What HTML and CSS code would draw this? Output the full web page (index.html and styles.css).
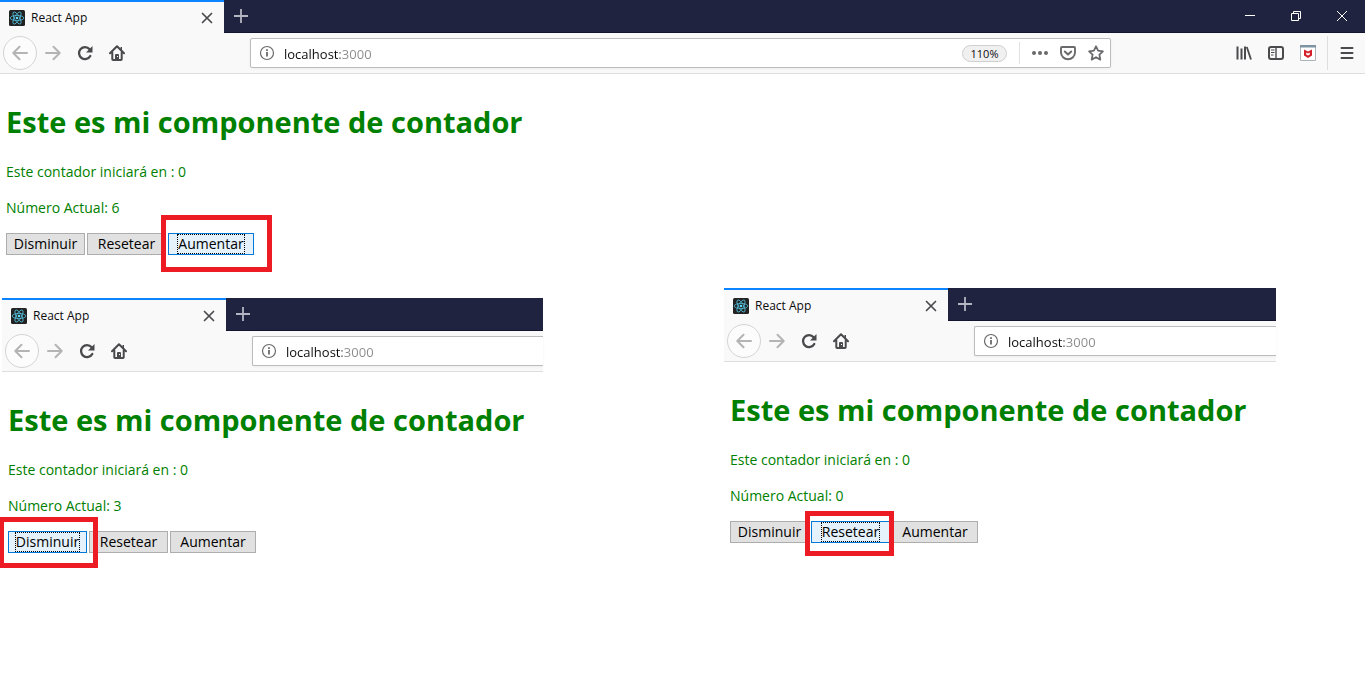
FILE: index.html
```html
<!DOCTYPE html>
<html lang="es">
<head>
<meta charset="utf-8">
<title>React App</title>
<link rel="stylesheet" href="styles.css">
</head>
<body>
<svg class="sprite" aria-hidden="true">
  <symbol id="react" viewBox="0 0 16 16"><rect width="16" height="16" rx="1.5" fill="#222"/><g fill="none" stroke="#53bfdc" stroke-width=".8"><ellipse cx="8" cy="8" rx="6.8" ry="2.6"/><ellipse cx="8" cy="8" rx="6.8" ry="2.6" transform="rotate(60 8 8)"/><ellipse cx="8" cy="8" rx="6.8" ry="2.6" transform="rotate(120 8 8)"/></g><circle cx="8" cy="8" r="1.3" fill="#61dafb"/></symbol>
  <symbol id="close" viewBox="0 0 16 16"><path d="M3.5 3.5l9 9m0-9l-9 9" fill="none" stroke="currentColor" stroke-width="1.7" stroke-linecap="round"/></symbol>
  <symbol id="plus" viewBox="0 0 16 16"><path d="M8 1v14M1 8h14" fill="none" stroke="currentColor" stroke-width="1.8"/></symbol>
  <symbol id="back" viewBox="0 0 16 16"><path d="M15 8H1.5M7.5 1.8L1.3 8l6.2 6.2" fill="none" stroke="currentColor" stroke-width="2" stroke-linecap="round" stroke-linejoin="round"/></symbol>
  <symbol id="forward" viewBox="0 0 16 16"><path d="M1 8h13.500M8.500 1.800L14.700 8l-6.200 6.200" fill="none" stroke="currentColor" stroke-width="2" stroke-linecap="round" stroke-linejoin="round"/></symbol>
  <symbol id="reload" viewBox="0 0 16 16"><path d="M13.300 11A6 6 0 1 1 12.600 4.200" fill="none" stroke="currentColor" stroke-width="2.300" stroke-linecap="round"/><path d="M15.500 1v6.500H9z" fill="currentColor"/></symbol>
  <symbol id="home" viewBox="0 0 16 16"><path d="M1 8.300L8 1.300l7 7M3.300 7.500v6.700q0 .8.800.8h7.800q.8 0 .8-.8V7.500" fill="none" stroke="currentColor" stroke-width="2" stroke-linecap="round" stroke-linejoin="round"/><path d="M6 15v-5q0-1 1-1h2q1 0 1 1v5zM11.500 2h1.500v4l-1.500-1.500z" fill="currentColor"/><path d="M8 11h1v1H8z" fill="#fff"/></symbol>
  <symbol id="info" viewBox="0 0 16 16"><circle cx="8" cy="8" r="6.500" fill="none" stroke="currentColor" stroke-width="1.200"/><path d="M8 7v4.500M8 4.200v1.700" stroke="currentColor" stroke-width="1.800"/></symbol>
  <symbol id="dots" viewBox="0 0 16 16"><g fill="currentColor"><circle cx="2" cy="8" r="2"/><circle cx="8" cy="8" r="2"/><circle cx="14" cy="8" r="2"/></g></symbol>
  <symbol id="pocket" viewBox="0 0 16 16"><path d="M2 2h12q1 0 1 1v4.500a7 6.700 0 0 1-14 0V3q0-1 1-1z" fill="none" stroke="currentColor" stroke-width="1.900"/><path d="M4.800 6.500L8 9.500l3.200-3" fill="none" stroke="currentColor" stroke-width="2" stroke-linecap="round" stroke-linejoin="round"/></symbol>
  <symbol id="star" viewBox="0 0 16 16"><path d="M8 1.300l2.100 4.400 4.800.6-3.500 3.300.9 5L8 12.200l-4.300 2.400.9-5L1.100 6.300l4.800-.6z" fill="none" stroke="currentColor" stroke-width="1.800" stroke-linejoin="round"/></symbol>
  <symbol id="library" viewBox="0 0 16 16"><path d="M1.500 1.500v13M5.500 3.500v11M9 1.500v13" fill="none" stroke="currentColor" stroke-width="2"/><path d="M10.800 2l4.200 12.500" fill="none" stroke="currentColor" stroke-width="1.800"/></symbol>
  <symbol id="sidebar" viewBox="0 0 16 16"><rect x="1" y="2" width="14" height="12" rx="2" fill="none" stroke="currentColor" stroke-width="2"/><path d="M8 2v12" stroke="currentColor" stroke-width="1.400"/><path d="M3 5h3.500M3 7.500h3.500M3 10h2.500" stroke="currentColor"/></symbol>
  <symbol id="shield" viewBox="0 0 16 16"><path d="M.5.500h15v15H.5z" fill="#fff" stroke="#aab4ba"/><path d="M0 0h16v2.500H0z" fill="#7c93a3"/><path d="M4 4.500l4 2 4-2v6L8 13l-4-2.500z" fill="#d5202c"/><path d="M6.200 7.500L8 8.500l1.800-1v2L8 10.500l-1.800-1z" fill="#fff"/></symbol>
  <symbol id="menu" viewBox="0 0 16 16"><path d="M2.500 3h11M2.500 8h11M2.500 13h11" stroke="currentColor" stroke-width="2" stroke-linecap="round"/></symbol>
  <symbol id="win-min" viewBox="0 0 16 16"><path d="M3 7.500h10" stroke="currentColor"/></symbol>
  <symbol id="win-max" viewBox="0 0 16 16"><path d="M3.500 5.500h7v7h-7zM5.500 5V3.500h7v7H11" fill="none" stroke="currentColor"/></symbol>
  <symbol id="win-close" viewBox="0 0 16 16"><path d="M3 3l10 10M13 3L3 13" stroke="currentColor"/></symbol>
</svg>

<section class="window">
  <header class="chrome">
    <div class="tabbar">
      <div class="tab"><svg class="icon"><use href="#react"/></svg><span class="tab-title">React App</span><button class="tab-close" aria-label="Cerrar pestaña"><svg class="icon"><use href="#close"/></svg></button></div>
      <button class="new-tab" aria-label="Nueva pestaña"><svg class="icon"><use href="#plus"/></svg></button>
      <div class="window-controls">
        <button aria-label="Minimizar"><svg class="icon"><use href="#win-min"/></svg></button>
        <button aria-label="Restaurar"><svg class="icon"><use href="#win-max"/></svg></button>
        <button aria-label="Cerrar"><svg class="icon"><use href="#win-close"/></svg></button>
      </div>
    </div>
    <div class="toolbar">
      <nav class="nav">
        <button class="back" aria-label="Atrás"><svg class="icon"><use href="#back"/></svg></button>
        <button class="faded" aria-label="Adelante"><svg class="icon"><use href="#forward"/></svg></button>
        <button aria-label="Recargar"><svg class="icon"><use href="#reload"/></svg></button>
        <button aria-label="Inicio"><svg class="icon"><use href="#home"/></svg></button>
      </nav>
      <div class="urlbar">
        <svg class="icon"><use href="#info"/></svg>
        <input class="url" type="text" aria-label="Dirección" value="localhost:3000">
        <button class="zoom">110%</button>
        <div class="page-actions">
          <button aria-label="Acciones"><svg class="icon"><use href="#dots"/></svg></button>
          <button aria-label="Guardar en Pocket"><svg class="icon"><use href="#pocket"/></svg></button>
          <button aria-label="Marcador"><svg class="icon"><use href="#star"/></svg></button>
        </div>
      </div>
      <div class="tools">
        <button aria-label="Catálogo"><svg class="icon"><use href="#library"/></svg></button>
        <button aria-label="Barra lateral"><svg class="icon"><use href="#sidebar"/></svg></button>
        <button aria-label="Protección"><svg class="icon"><use href="#shield"/></svg></button>
        <button class="menu" aria-label="Menú"><svg class="icon"><use href="#menu"/></svg></button>
      </div>
    </div>
  </header>
  <main class="counter">
    <h1>Este es mi componente de contador</h1>
    <p>Este contador iniciará en : 0</p>
    <p>Número Actual: 6</p>
    <div class="actions">
      <div class="action"><button>Disminuir</button></div>
      <div class="action"><button>Resetear</button></div>
      <div class="action wide"><button class="focused"><span>Aumentar</span></button><i class="mark mark-increase"></i></div>
    </div>
  </main>
</section>

<div class="examples">
  <section class="window partial lower">
    <header class="chrome">
      <div class="tabbar">
        <div class="tab"><svg class="icon"><use href="#react"/></svg><span class="tab-title">React App</span><button class="tab-close" aria-label="Cerrar pestaña"><svg class="icon"><use href="#close"/></svg></button></div>
        <button class="new-tab" aria-label="Nueva pestaña"><svg class="icon"><use href="#plus"/></svg></button>
      </div>
      <div class="toolbar">
        <nav class="nav">
          <button class="back" aria-label="Atrás"><svg class="icon"><use href="#back"/></svg></button>
          <button class="faded" aria-label="Adelante"><svg class="icon"><use href="#forward"/></svg></button>
          <button aria-label="Recargar"><svg class="icon"><use href="#reload"/></svg></button>
          <button aria-label="Inicio"><svg class="icon"><use href="#home"/></svg></button>
        </nav>
        <div class="urlbar">
          <svg class="icon"><use href="#info"/></svg>
          <input class="url" type="text" aria-label="Dirección" value="localhost:3000">
        </div>
      </div>
    </header>
    <div class="counter">
      <h1>Este es mi componente de contador</h1>
      <p>Este contador iniciará en : 0</p>
      <p>Número Actual: 3</p>
      <div class="actions">
        <div class="action"><button class="focused"><span>Disminuir</span></button><i class="mark mark-decrease"></i></div>
        <div class="action"><button>Resetear</button></div>
        <div class="action wide"><button>Aumentar</button></div>
      </div>
    </div>
  </section>

  <section class="window partial second">
    <header class="chrome">
      <div class="tabbar">
        <div class="tab"><svg class="icon"><use href="#react"/></svg><span class="tab-title">React App</span><button class="tab-close" aria-label="Cerrar pestaña"><svg class="icon"><use href="#close"/></svg></button></div>
        <button class="new-tab" aria-label="Nueva pestaña"><svg class="icon"><use href="#plus"/></svg></button>
      </div>
      <div class="toolbar">
        <nav class="nav">
          <button class="back" aria-label="Atrás"><svg class="icon"><use href="#back"/></svg></button>
          <button class="faded" aria-label="Adelante"><svg class="icon"><use href="#forward"/></svg></button>
          <button aria-label="Recargar"><svg class="icon"><use href="#reload"/></svg></button>
          <button aria-label="Inicio"><svg class="icon"><use href="#home"/></svg></button>
        </nav>
        <div class="urlbar">
          <svg class="icon"><use href="#info"/></svg>
          <input class="url" type="text" aria-label="Dirección" value="localhost:3000">
        </div>
      </div>
    </header>
    <div class="counter">
      <h1>Este es mi componente de contador</h1>
      <p>Este contador iniciará en : 0</p>
      <p>Número Actual: 0</p>
      <div class="actions">
        <div class="action"><button>Disminuir</button></div>
        <div class="action"><button class="focused"><span>Resetear</span></button><i class="mark mark-reset"></i></div>
        <div class="action wide"><button>Aumentar</button></div>
      </div>
    </div>
  </section>
</div>
</body>
</html>
```

FILE: styles.css
```css
* { box-sizing: border-box; }

body {
  min-height: 100vh;
  margin: 0;
  background: #fff;
  color: #000;
  font-family: "Segoe UI", "Open Sans", "Noto Sans", sans-serif;
}

.sprite { display: none; }

button {
  display: flex;
  align-items: center;
  justify-content: center;
  margin: 0;
  padding: 0;
  border: 0;
  background: none;
  color: inherit;
  font: inherit;
}

.icon {
  display: block;
  flex: none;
  width: 16px;
  height: 16px;
}

/* Browser chrome */
.chrome {
  border-bottom: 1px solid #dedede;
  background: #f9f9fa;
  color: #4a4a4d;
}

.tabbar {
  display: flex;
  height: 33px;
  border-bottom: 1px solid #121430;
  background: #202340;
}

.tab {
  display: flex;
  align-items: center;
  gap: 6px;
  width: 224px;
  height: 33px;
  padding: 0 9px;
  border-top: 2px solid #0a84ff;
  background: #f9f9fa;
}

.tab-title {
  flex: 1;
  color: #0c0c0d;
  font-size: 12px;
}

.new-tab {
  width: 34px;
  color: #b4b5c3;
}

.window-controls {
  display: flex;
  margin-left: auto;
  color: #fff;
}

.window-controls button { width: 46px; }

.toolbar {
  display: flex;
  align-items: center;
  gap: 117px;
  height: 40px;
}

.nav {
  display: flex;
  align-items: center;
  padding-left: 3px;
}

.nav button {
  width: 32px;
  height: 32px;
}

.nav .back {
  width: 34px;
  height: 34px;
  border: 1px solid #d4d4d5;
  border-radius: 50%;
  background: #fcfcfc;
  color: #b4b4b5;
}

.nav .faded { color: #b4b4b5; }

.urlbar {
  display: flex;
  flex: 1;
  align-items: center;
  min-width: 0;
  height: 30px;
  padding-left: 8px;
  border: 1px solid #bcbcbe;
  border-radius: 2px;
  background: #fff;
  box-shadow: 0 1px 3px #0000000d;
  color: #6a6a6c;
}

.url {
  flex: 1;
  min-width: 0;
  height: 28px;
  margin-left: 9px;
  padding: 2px 0 0;
  border: 0;
  outline: 0;
  background: linear-gradient(90deg, #0c0c0d 56px, #8a8a8c 56px);
  background-clip: text;
  -webkit-background-clip: text;
  color: transparent;
  font-family: inherit;
  font-size: 13px;
}

.zoom {
  width: 45px;
  height: 17px;
  margin-right: 12px;
  border: 1px solid #cfcfd0;
  border-radius: 9px;
  background: #f0f0f1;
  color: #0c0c0d;
  font-size: 11px;
}

.page-actions {
  display: flex;
  padding-left: 6px;
  border-left: 1px solid #e2e2e3;
}

.page-actions button {
  width: 28px;
  height: 22px;
}

.tools {
  display: flex;
  align-items: center;
}

.tools button {
  width: 32px;
  height: 34px;
}

.tools .menu {
  width: 38px;
  margin-left: 3px;
  border-left: 1px solid #dedede;
}

/* Counter page */
.counter {
  padding: 28px 0 0 6px;
  color: #008000;
}

.counter h1 {
  margin: 0 0 20px;
  font-size: 29px;
  font-weight: 700;
  line-height: 40px;
}

.counter p {
  margin: 0 0 16px;
  font-size: 14px;
  line-height: 20px;
}

.counter p:last-of-type { margin-bottom: 15px; }

.actions {
  display: flex;
  gap: 2px;
}

.action {
  position: relative;
  width: 79px;
}

.action.wide { width: 86px; }

.action button {
  width: 100%;
  height: 22px;
  border: 1px solid #adadad;
  background: #e1e1e1;
  color: #000;
  font-size: 14px;
  line-height: 18px;
}

.action .focused {
  border-color: #0078d7;
  background: #e5f1fb;
}

.focused span {
  outline: 1px dotted #000;
}

/* Red highlight frames drawn over the pressed button */
.mark {
  position: absolute;
  z-index: 1;
  border: 5px solid #ed1c24;
  pointer-events: none;
}

.mark-increase { inset: -18px -18px -17px -7px; }
.mark-decrease { inset: -14px -11px -15px -9px; }
.mark-reset { inset: -10px -4px -13px -6px; }

/* Cropped windows */
.examples {
  display: grid;
  grid-template-columns: 541fr 181fr 552fr 89fr;
  align-items: start;
  margin-top: 33px;
  padding: 0 0 32px 2px;
}

.lower { margin-top: 10px; }

.second { grid-column: 3; }

.partial .urlbar {
  border-right: 0;
  border-radius: 2px 0 0 2px;
}
```
